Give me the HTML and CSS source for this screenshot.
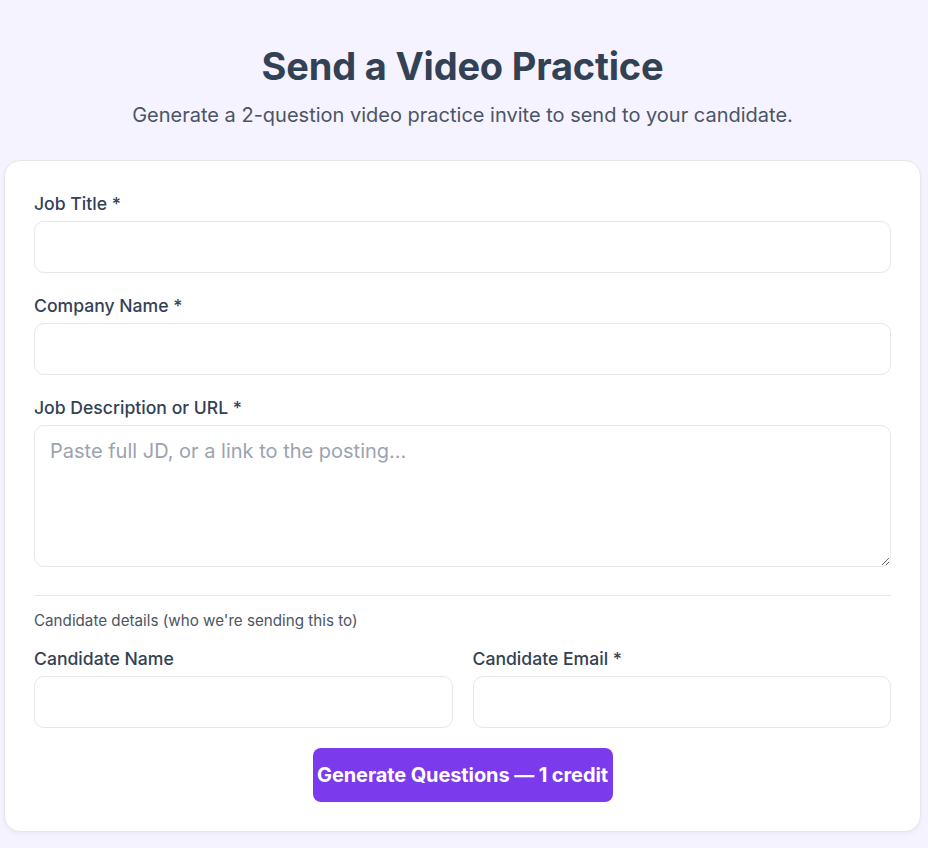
FILE: index.html
```html
<!DOCTYPE html>
<html lang="en">
<head>
<meta charset="utf-8">
<title>Send a Video Practice</title>
<link rel="stylesheet" href="styles.css">
</head>
<body>
<main class="page">
  <header class="hero">
    <h1 class="title">Send a Video Practice</h1>
    <p class="subtitle">Generate a 2-question video practice invite to send to your candidate.</p>
  </header>
  <form class="card">
    <div class="field">
      <label class="label" for="job">Job Title *</label>
      <input class="input" id="job" type="text">
    </div>
    <div class="field">
      <label class="label" for="company">Company Name *</label>
      <input class="input" id="company" type="text">
    </div>
    <div class="field">
      <label class="label" for="jd">Job Description or URL *</label>
      <textarea class="input textarea" id="jd" placeholder="Paste full JD, or a link to the posting..."></textarea>
    </div>
    <hr class="divider">
    <p class="section-note">Candidate details (who we're sending this to)</p>
    <div class="row">
      <div class="field">
        <label class="label" for="cname">Candidate Name</label>
        <input class="input" id="cname" type="text">
      </div>
      <div class="field">
        <label class="label" for="cemail">Candidate Email *</label>
        <input class="input" id="cemail" type="email">
      </div>
    </div>
    <div class="actions">
      <button class="btn" type="button">Generate Questions — 1 credit</button>
    </div>
  </form>
</main>
</body>
</html>
```
FILE: styles.css
```css
* { box-sizing: border-box; }
html, body { margin: 0; padding: 0; }
body {
  background: #f5f3ff;
  font-family: Inter, "Noto Sans", sans-serif;
  color: #334155;
}
.page {
  padding: 40px 7px 16px 4px;
}
.hero {
  text-align: center;
  margin-bottom: 31px;
}
.title {
  margin: 0;
  font-size: 38px;
  line-height: 52px;
  font-weight: 700;
  color: #334155;
  letter-spacing: -0.2px;
}
.subtitle {
  margin: 9px 0 0;
  font-size: 20px;
  line-height: 28px;
  color: #4b5563;
}
.card {
  background: #fff;
  border: 1px solid #e5e7eb;
  border-radius: 16px;
  padding: 30px 29px 29px;
  box-shadow: 0 2px 4px rgba(76, 29, 149, 0.05);
  display: flex;
  flex-direction: column;
}
.field {
  display: flex;
  flex-direction: column;
  margin-bottom: 20px;
}
.label {
  font-size: 17.6px;
  line-height: 26px;
  font-weight: 500;
  color: #334155;
  margin-bottom: 4px;
}
.input {
  height: 52px;
  border: 1px solid #e5e7eb;
  border-radius: 10px;
  padding: 0 15px;
  font-family: inherit;
  font-size: 20px;
  color: #111827;
  background: #fff;
  outline: none;
}
.textarea {
  height: 142px;
  padding: 11px 15px;
  line-height: 28px;
  resize: vertical;
}
.textarea::placeholder { color: #9ca3af; }
.divider {
  border: 0;
  border-top: 1px solid #e5e7eb;
  margin: 8px 0 0;
}
.section-note {
  margin: 14px 0 14px;
  font-size: 15.2px;
  line-height: 22px;
  color: #4b5563;
}
.row {
  display: grid;
  grid-template-columns: 1fr 1fr;
  gap: 20px;
}
.actions {
  display: flex;
  justify-content: center;
}
.btn {
  width: 300px;
  height: 54px;
  border: 0;
  border-radius: 8px;
  background: #7c3aed;
  color: #fff;
  font-family: inherit;
  font-size: 20px;
  font-weight: 700;
  padding: 0 4px;
  letter-spacing: -0.1px;
}
```
